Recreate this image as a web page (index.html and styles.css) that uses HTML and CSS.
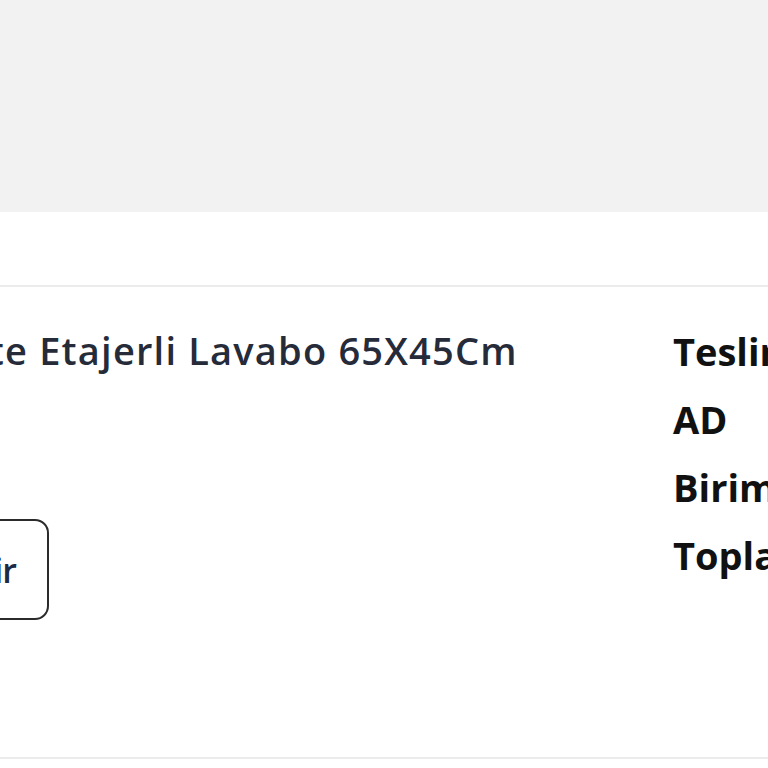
FILE: index.html
```html
<!DOCTYPE html>
<html lang="tr">
<head>
  <meta charset="UTF-8" />
  <meta name="viewport" content="width=device-width, initial-scale=1.0">
  <title>Sepetim</title>
  <link rel="stylesheet" href="styles.css">
</head>
<body>
  <div class="page-head"></div>

  <div class="cart">
    <div class="cart-item">
      <div class="item-info">
        <h2 class="item-name">Creavit Elite Etajerli Lavabo 65X45Cm</h2>
        <button class="item-btn">Değiştir</button>
      </div>
      <div class="item-summary">
        <p>Teslimat</p>
        <p>AD</p>
        <p>Birim Fiyat</p>
        <p>Toplam</p>
      </div>
    </div>
  </div>
</body>
</html>
```

FILE: styles.css
```css
body {
  margin: 0;
  font-family: "Open Sans", "Noto Sans", sans-serif;
  background-color: #fff;
  overflow: hidden;
}
.page-head {
  height: 212px;
  background-color: #f2f2f2;
}
.cart {
  margin-top: 73px;
  border-top: 2px solid #ececec;
  border-bottom: 2px solid #ececec;
}
.cart-item {
  display: flex;
  margin-left: -207px;
  height: 470px;
}
.item-info {
  width: 880px;
  flex-shrink: 0;
  padding-top: 37px;
}
.item-name {
  margin: 0;
  font-size: 38px;
  font-weight: 600;
  letter-spacing: 1.2px;
  line-height: 52px;
  color: #262b3a;
}
.item-btn {
  margin-top: 143px;
  height: 101px;
  width: 256px;
  padding: 0 31px 0 0;
  font-family: inherit;
  font-size: 34px;
  font-weight: 600;
  letter-spacing: -1px;
  color: #1d2a46;
  text-align: right;
  background-color: #fff;
  border: 2px solid #2b2b2b;
  border-radius: 14px;
}
.item-summary {
  padding-top: 38px;
  white-space: nowrap;
}
.item-summary p {
  margin: 0 0 16px;
  font-size: 38px;
  font-weight: 700;
  line-height: 52px;
  color: #111;
}
```
